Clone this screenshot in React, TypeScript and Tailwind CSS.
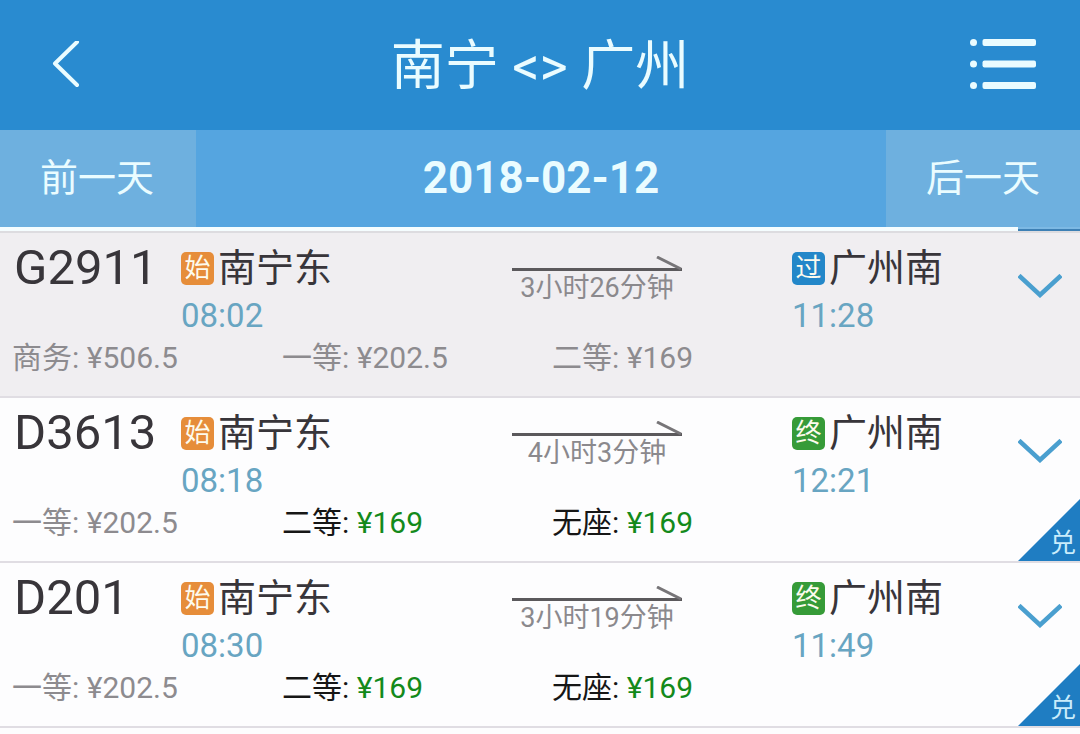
type Seat = { name: string; price: string; available: boolean };

type StopKind = "start" | "pass" | "end";

type Train = {
  no: string;
  from: string;
  fromKind: StopKind;
  depart: string;
  duration: string;
  to: string;
  toKind: StopKind;
  arrive: string;
  seats: Seat[];
  redeemable: boolean;
  soldOut: boolean;
};

const trains: Train[] = [
  {
    no: "G2911",
    from: "南宁东",
    fromKind: "start",
    depart: "08:02",
    duration: "3小时26分钟",
    to: "广州南",
    toKind: "pass",
    arrive: "11:28",
    seats: [
      { name: "商务", price: "506.5", available: false },
      { name: "一等", price: "202.5", available: false },
      { name: "二等", price: "169", available: false },
    ],
    redeemable: false,
    soldOut: true,
  },
  {
    no: "D3613",
    from: "南宁东",
    fromKind: "start",
    depart: "08:18",
    duration: "4小时3分钟",
    to: "广州南",
    toKind: "end",
    arrive: "12:21",
    seats: [
      { name: "一等", price: "202.5", available: false },
      { name: "二等", price: "169", available: true },
      { name: "无座", price: "169", available: true },
    ],
    redeemable: true,
    soldOut: false,
  },
  {
    no: "D201",
    from: "南宁东",
    fromKind: "start",
    depart: "08:30",
    duration: "3小时19分钟",
    to: "广州南",
    toKind: "end",
    arrive: "11:49",
    seats: [
      { name: "一等", price: "202.5", available: false },
      { name: "二等", price: "169", available: true },
      { name: "无座", price: "169", available: true },
    ],
    redeemable: true,
    soldOut: false,
  },
];

const stopStyle: Record<StopKind, { label: string; color: string }> = {
  start: { label: "始", color: "bg-[#e68d3a]" },
  pass: { label: "过", color: "bg-[#2387c9]" },
  end: { label: "终", color: "bg-[#369b38]" },
};

function Stop({ kind, name, time }: { kind: StopKind; name: string; time: string }) {
  const { label, color } = stopStyle[kind];
  return (
    <div>
      <div className="flex items-center gap-1">
        <span
          className={`flex size-[33px] items-center justify-center rounded-[5px] text-[26px] leading-[33px] text-[#fdfbee] ${color}`}
        >
          {label}
        </span>
        <span className="text-[38px] leading-12 text-[#38353a]">{name}</span>
      </div>
      <time className="block text-[33px] leading-12 text-[#68a5c2]">{time}</time>
    </div>
  );
}

function TrainRow({ train }: { train: Train }) {
  return (
    <li
      className={`relative border-b-2 border-[#e0dde3] pt-[11px] pb-5 ${train.soldOut ? "bg-[#f0eef1]" : "bg-[#fdfdfe]"}`}
    >
      <div className="grid grid-cols-[181fr_331fr_280fr_226fr_62fr] items-start">
        <h2 className="pl-[14px] text-[49px] leading-12 text-[#38353a]">{train.no}</h2>
        <Stop kind={train.fromKind} name={train.from} time={train.depart} />
        <div className="flex w-[170px] flex-col items-center pt-3">
          <svg className="h-4 w-full" viewBox="0 0 170 16" fill="none" aria-hidden="true">
            <path d="M0 13.5H170" stroke="#5b595c" strokeWidth="3" />
            <path d="M145 1L169 13" stroke="#777578" strokeWidth="3" />
          </svg>
          <span className="whitespace-nowrap text-[27px] leading-8 text-[#8b898d]">{train.duration}</span>
        </div>
        <Stop kind={train.toKind} name={train.to} time={train.arrive} />
        <button type="button" aria-label={`展开 ${train.no}`} className="pt-[30px]">
          <svg className="h-6 w-11" viewBox="0 0 44 24" fill="none" aria-hidden="true">
            <path d="M1 1.5L22 21L43 1.5" stroke="#4a9fcf" strokeWidth="4.5" />
          </svg>
        </button>
      </div>
      <div className="grid grid-cols-4 text-[30px] leading-9">
        {train.seats.map((seat) => (
          <span
            key={seat.name}
            className={`whitespace-nowrap pl-3 ${seat.available ? "text-[#161616]" : "text-[#8d8b8f]"}`}
          >
            {seat.name}:{" "}
            <span className={seat.available ? "text-[#138a1b]" : ""}>¥{seat.price}</span>
          </span>
        ))}
      </div>
      {train.redeemable && (
        <span className="absolute right-0 bottom-0 flex size-[62px] items-end justify-end bg-[#1f7dc2] pr-1 text-[26px] leading-9 text-[#c9ecfb] [clip-path:polygon(100%_0,100%_100%,0_100%)]">
          兑
        </span>
      )}
    </li>
  );
}

export default function App() {
  return (
    <div className="min-h-screen bg-[#fdfdfe] font-[Roboto,'Noto_Sans_CJK_SC',sans-serif]">
      <header className="flex items-center justify-between bg-[#298bd0] px-11 py-8 text-[#eafcff]">
        <button type="button" aria-label="返回" className="flex w-[66px] pl-2">
          <svg className="h-12 w-7" viewBox="0 0 28 48" fill="none" aria-hidden="true">
            <path
              d="M25 1L3 22.5L25 44"
              stroke="currentColor"
              strokeWidth="4"
              strokeLinecap="round"
              strokeLinejoin="round"
            />
          </svg>
        </button>
        <h1 className="pt-1 text-[54px] leading-[62px]">南宁 &lt;&gt; 广州</h1>
        <button type="button" aria-label="菜单">
          <svg className="h-[52px] w-[66px]" viewBox="0 0 66 52" fill="currentColor" aria-hidden="true">
            <circle cx="3.5" cy="3.5" r="3.5" />
            <circle cx="3.5" cy="25" r="3.5" />
            <circle cx="3.5" cy="46.5" r="3.5" />
            <rect x="12.5" y="0" width="53.5" height="7" rx="2" />
            <rect x="12.5" y="21.5" width="53.5" height="7" rx="2" />
            <rect x="12.5" y="43" width="53.5" height="7" rx="2" />
          </svg>
        </button>
      </header>
      <nav className="flex bg-[#55a5e0] text-[#eafcff]">
        <button type="button" className="bg-[#6eb0df] pt-6 pr-[42px] pb-[25px] pl-10 text-[38px] leading-12">
          前一天
        </button>
        <time className="flex-1 pt-6 pb-[25px] text-center text-[44px] leading-12 font-bold">2018-02-12</time>
        <button type="button" className="bg-[#6eb0df] px-10 pt-6 pb-[25px] text-[38px] leading-12">
          后一天
        </button>
      </nav>
      <main>
        <div className="flex justify-end border-b-2 border-[#dddce0] bg-[#f5fdff]">
          <div className="h-1 w-[62px] border-t-2 border-[#7db9e4] bg-[#3d80b5]" />
        </div>
        <ul>
          {trains.map((train) => (
            <TrainRow key={train.no} train={train} />
          ))}
        </ul>
      </main>
    </div>
  );
}
